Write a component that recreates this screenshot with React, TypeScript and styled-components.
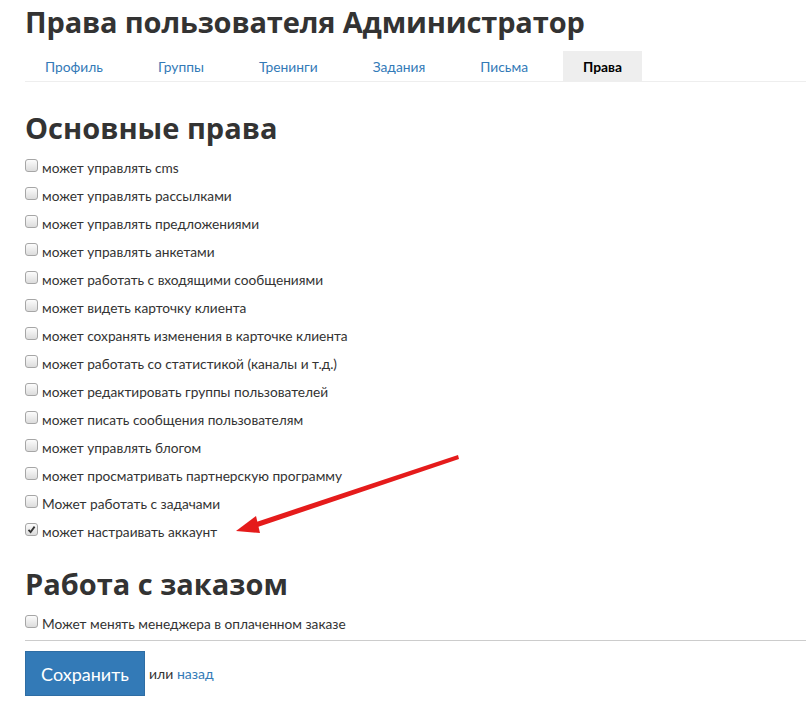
import React from "react";
import styled, { createGlobalStyle } from "styled-components";

const GlobalStyle = createGlobalStyle`
  html, body {
    margin: 0;
    padding: 0;
    background: #fff;
  }
  body {
    font-family: "Lato", "Open Sans", sans-serif;
    color: #333;
  }
`;

const Page = styled.div`
  position: relative;
  padding: 2px 0 0 25px;
  width: 806px;
  box-sizing: border-box;
`;

const Title = styled.h1`
  font-family: "Open Sans", sans-serif;
  font-weight: 700;
  font-size: 29px;
  line-height: 40px;
  letter-spacing: -0.15px;
  margin: 0 0 9px;
  color: #333;
`;

const Tabs = styled.ul`
  display: flex;
  gap: 15px;
  list-style: none;
  margin: 0;
  padding: 0;
  border-bottom: 1px solid #eee;
`;

const Tab = styled.li<{ $active?: boolean }>`
  height: 30px;
  display: flex;
  align-items: center;
  padding: 0 20px;
  font-size: 13.8px;
  background: ${(p) => (p.$active ? "#eee" : "transparent")};
  color: ${(p) => (p.$active ? "#000" : "#337ab7")};
  font-weight: ${(p) => (p.$active ? 700 : 400)};
`;

const Section = styled.h2<{ $top: number }>`
  font-family: "Open Sans", sans-serif;
  font-weight: 700;
  font-size: 29px;
  line-height: 36px;
  margin: ${(p) => p.$top}px 0 7px;
  color: #333;
`;

const List = styled.div`
  display: flex;
  flex-direction: column;
`;

const Row = styled.label`
  display: flex;
  align-items: center;
  gap: 4px;
  height: 28px;
  font-size: 13.7px;
  color: #333;
`;

const Box = styled.span`
  width: 11px;
  height: 11px;
  border: 1px solid #a6a6a6;
  border-radius: 3px;
  background: linear-gradient(#fcfcfc, #dcdcdc);
  display: flex;
  align-items: center;
  justify-content: center;
  margin-top: -3px;
`;

const Rule = styled.div`
  border-top: 1px solid #ccc;
  margin-top: 3px;
`;

const Footer = styled.div`
  display: flex;
  align-items: center;
  gap: 4px;
  margin-top: 10px;
  font-size: 14px;
`;

const SaveButton = styled.button`
  width: 120px;
  height: 45px;
  background: #337ab7;
  border: 1px solid #2e6da4;
  color: #fff;
  font-family: "Lato", sans-serif;
  font-size: 18px;
  padding: 0;
`;

const Link = styled.a`
  color: #337ab7;
  text-decoration: none;
`;

const Arrow = styled.svg`
  position: absolute;
  left: 0;
  top: 0;
  pointer-events: none;
`;

const tabs = ["Профиль", "Группы", "Тренинги", "Задания", "Письма", "Права"];

const mainRights: [string, boolean][] = [
  ["может управлять cms", false],
  ["может управлять рассылками", false],
  ["может управлять предложениями", false],
  ["может управлять анкетами", false],
  ["может работать с входящими сообщениями", false],
  ["может видеть карточку клиента", false],
  ["может сохранять изменения в карточке клиента", false],
  ["может работать со статистикой (каналы и т.д.)", false],
  ["может редактировать группы пользователей", false],
  ["может писать сообщения пользователям", false],
  ["может управлять блогом", false],
  ["может просматривать партнерскую программу", false],
  ["Может работать с задачами", false],
  ["может настраивать аккаунт", true],
];

const Check = ({ label, checked }: { label: string; checked: boolean }) => (
  <Row>
    <Box>
      {checked && (
        <svg width="9" height="9" viewBox="0 0 9 9">
          <path d="M1.5 4.8 L3.6 7 L7.6 1.6" fill="none" stroke="#333" strokeWidth="1.8" />
        </svg>
      )}
    </Box>
    {label}
  </Row>
);

const App = () => {
  return (
    <>
      <GlobalStyle />
      <Page>
        <Title>Права пользователя Администратор</Title>
        <Tabs>
          {tabs.map((t) => (
            <Tab key={t} $active={t === "Права"}>
              {t}
            </Tab>
          ))}
        </Tabs>
        <Section $top={28}>Основные права</Section>
        <List>
          {mainRights.map(([label, checked]) => (
            <Check key={label} label={label} checked={checked} />
          ))}
        </List>
        <Section $top={21}>Работа с заказом</Section>
        <List>
          <Check label="Может менять менеджера в оплаченном заказе" checked={false} />
        </List>
        <Rule />
        <Footer>
          <SaveButton>Сохранить</SaveButton>
          <span>
            или <Link href="#">назад</Link>
          </span>
        </Footer>
        <Arrow width="806" height="706">
          <polygon points="458,455 459,459 252,529 250,524" fill="#e51b1b" />
          <polygon points="236,531 256,516 260,533" fill="#e51b1b" />
        </Arrow>
      </Page>
    </>
  );
};

export default App;
